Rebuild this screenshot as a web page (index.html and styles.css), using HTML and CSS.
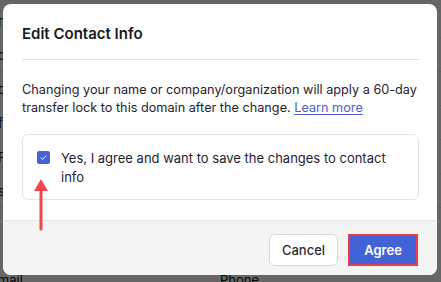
FILE: index.html
```html
<!DOCTYPE html>
<html>
<head>
<meta charset="utf-8">
<link rel="stylesheet" href="styles.css">
</head>
<body>
<div class="page">
  <div class="page-row"><span class="bg-label">r</span></div>
  <div class="page-row"><span class="bg-label">c</span></div>
  <div class="page-row"><span class="bg-label">c</span></div>
  <div class="page-row"><span class="bg-label">f</span></div>
  <div class="page-row"><span class="bg-label">F</span></div>
  <div class="page-row"><span class="bg-label">s</span></div>
  <div class="page-foot"><span class="foot-email">Email</span><span class="foot-phone">Phone</span></div>
</div>
<div class="overlay"></div>
<div class="modal">
  <div class="modal-header">
    <h1 class="modal-title">Edit Contact Info</h1>
  </div>
  <div class="modal-body">
    <p class="notice">Changing your name or company/organization will apply a 60-day transfer lock to this domain after the change. <a class="link" href="#">Learn more</a></p>
    <label class="agree-box">
      <span class="checkbox"><svg width="13" height="13" viewBox="0 0 13 13"><path d="M4 6.8 L5.6 8.3 L9 4.8" fill="none" stroke="#fff" stroke-width="1" stroke-linecap="round" stroke-linejoin="round"/></svg></span>
      <span class="agree-text">Yes, I agree and want to save the changes to contact info</span>
    </label>
  </div>
  <div class="modal-footer">
    <button class="btn btn-cancel">Cancel</button>
    <button class="btn btn-agree">Agree</button>
  </div>
  <svg class="arrow" width="16" height="52" viewBox="0 0 16 52"><polygon points="8,0 15,12 1,12" fill="#f0484c"/><line x1="8" y1="10" x2="8" y2="50" stroke="#f0484c" stroke-width="3" stroke-linecap="round"/></svg>
</div>
</body>
</html>
```
FILE: styles.css
```css
* { box-sizing: border-box; }
html, body { margin: 0; padding: 0; }
body {
  width: 441px;
  height: 282px;
  overflow: hidden;
  background: #fff;
  font-family: Inter, "Noto Sans", sans-serif;
  position: relative;
}
.page {
  padding-top: 4px;
}
.page-row {
  height: 34px;
  border-bottom: 1px solid #e4e4e4;
  display: flex;
  align-items: center;
  font-size: 13px;
  color: #222;
}
.bg-label { margin-left: -2px; }
.page-foot {
  position: absolute;
  top: 272px;
  left: 0;
  width: 441px;
  font-size: 13px;
  color: #111;
}
.foot-email { position: absolute; left: -10px; top: 0; }
.foot-phone { position: absolute; left: 220px; top: 0; }
.overlay {
  position: absolute;
  inset: 0;
  background: rgba(0, 0, 0, 0.6);
}
.modal {
  position: absolute;
  left: 3px;
  top: 4px;
  width: 434px;
  height: 271px;
  background: #fff;
  border-radius: 8px;
  overflow: hidden;
  display: flex;
  flex-direction: column;
}
.modal-header {
  margin: 0 18px 0 19px;
  padding: 19px 0 14px;
  border-bottom: 1px solid #e3e3e3;
}
.modal-title {
  margin: 0;
  font-size: 15px;
  line-height: 22px;
  font-weight: 600;
  color: #161a24;
}
.modal-body {
  padding: 21px 18px 20px 19px;
  display: flex;
  flex-direction: column;
  gap: 17px;
}
.notice {
  margin: 0 -4px 0 0;
  font-size: 12.7px;
  line-height: 18px;
  color: #1f2330;
}
.link {
  color: #4a5fd6;
  text-decoration: underline;
  text-underline-offset: 2px;
}
.agree-box {
  display: flex;
  align-items: flex-start;
  gap: 11px;
  padding: 14px 14px 12px;
  border: 1px solid #e3e3e3;
  border-radius: 6px;
}
.checkbox {
  flex: none;
  width: 13px;
  height: 13px;
  margin-top: 2px;
  background: #4763d8;
  border-radius: 2px;
  display: flex;
}
.agree-text {
  font-size: 13px;
  line-height: 19px;
  color: #1f2330;
}
.modal-footer {
  flex: 1;
  background: #f4f4f4;
  border-top: 1px solid #e6e6e6;
  display: flex;
  justify-content: flex-end;
  align-items: flex-start;
  gap: 10px;
  padding: 13px 19px 0 0;
}
.btn {
  height: 32px;
  font-family: Inter, "Noto Sans", sans-serif;
  font-size: 13px;
  font-weight: 500;
  border-radius: 6px;
  cursor: pointer;
}
.btn-cancel {
  width: 69px;
  background: #fff;
  border: 1px solid #d6d6da;
  color: #2a2d36;
}
.btn-agree {
  width: 70px;
  background: #4263d8;
  border: 2px solid #f13b42;
  border-radius: 0;
  color: #fff;
  font-weight: 600;
}
.arrow {
  position: absolute;
  left: 30px;
  top: 175px;
}
```
